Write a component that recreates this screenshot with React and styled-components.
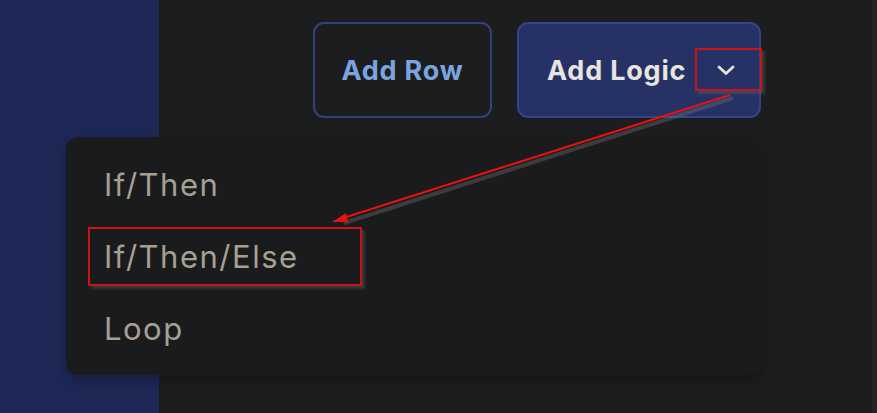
import styled, { createGlobalStyle } from "styled-components";

const GlobalStyle = createGlobalStyle`
  html, body {
    margin: 0;
    padding: 0;
    background: #1c1d1f;
    font-family: Inter, "Noto Sans", sans-serif;
  }
`;

const Page = styled.div`
  position: relative;
  display: flex;
  width: 877px;
  height: 413px;
  overflow: hidden;
  background: #1c1d1f;
`;

const Sidebar = styled.aside`
  width: 159px;
  flex-shrink: 0;
  background: #1e2856;
`;

const Main = styled.main`
  flex: 1;
  display: flex;
  flex-direction: column;
  border-right: 5px solid #242527;
`;

const Toolbar = styled.div`
  display: flex;
  justify-content: flex-end;
  gap: 25px;
  padding: 22px 111px 0 0;
`;

const Button = styled.button`
  display: flex;
  align-items: center;
  justify-content: ${({ $primary }) => ($primary ? "flex-start" : "center")};
  width: ${({ $w }) => $w}px;
  height: 96px;
  padding: ${({ $primary }) => ($primary ? "0 0 0 28px" : "0")};
  box-sizing: border-box;
  border-radius: 11px;
  border: 2px solid ${({ $primary }) => ($primary ? "#34448a" : "#30427f")};
  background: ${({ $primary }) => ($primary ? "#263266" : "transparent")};
  color: ${({ $primary }) => ($primary ? "#e8e4de" : "#7aa4df")};
  font-family: Inter, sans-serif;
  font-weight: 700;
  font-size: 27px;
  letter-spacing: 0.8px;
`;

const ChevronBox = styled.span`
  display: flex;
  align-items: center;
  justify-content: center;
  width: 66px;
  height: 42px;
  margin-left: auto;
`;

const Menu = styled.ul`
  position: absolute;
  left: 66px;
  top: 137px;
  width: 696px;
  margin: 0;
  padding: 11px 0;
  list-style: none;
  background: #1a1b1d;
  border-radius: 12px;
  box-shadow: 0 6px 14px rgba(0, 0, 0, 0.25);
`;

const MenuItem = styled.li`
  display: flex;
  align-items: center;
  height: 72px;
  padding-left: 38px;
  color: #a7a092;
  font-size: 31px;
  font-weight: 400;
  letter-spacing: 1.5px;
`;

const Highlight = styled.div`
  position: absolute;
  left: ${({ $x }) => $x}px;
  top: ${({ $y }) => $y}px;
  width: ${({ $w }) => $w}px;
  height: ${({ $h }) => $h}px;
  border: 2px solid #cc1212;
  box-sizing: border-box;
  box-shadow: 3px 3px 2px rgba(110, 110, 110, 0.35);
  pointer-events: none;
`;

const Overlay = styled.svg`
  position: absolute;
  left: 0;
  top: 0;
  pointer-events: none;
`;

function Chevron() {
  return (
    <svg width="22" height="14" viewBox="0 0 22 14">
      <path
        d="M4 4 L11 10.5 L18 4"
        fill="none"
        stroke="#e8e4de"
        strokeWidth="2.8"
        strokeLinecap="round"
        strokeLinejoin="round"
      />
    </svg>
  );
}

export default function App() {
  return (
    <>
      <GlobalStyle />
      <Page>
        <Sidebar />
        <Main>
          <Toolbar>
            <Button $w={179}>Add Row</Button>
            <Button $primary $w={244}>
              Add Logic
              <ChevronBox>
                <Chevron />
              </ChevronBox>
            </Button>
          </Toolbar>
        </Main>

        <Menu>
          <MenuItem>If/Then</MenuItem>
          <MenuItem>If/Then/Else</MenuItem>
          <MenuItem>Loop</MenuItem>
        </Menu>

        <Highlight $x={695} $y={48} $w={67} $h={43} />
        <Highlight $x={88} $y={227} $w={274} $h={59} />

        <Overlay width="877" height="413">
          <line x1="733" y1="98" x2="344" y2="223" stroke="rgba(110,110,110,0.4)" strokeWidth="4" />
          <line x1="730" y1="95" x2="340" y2="219" stroke="#e81010" strokeWidth="2.2" />
          <polygon points="332,222 346,213 348,222" fill="#e81010" />
        </Overlay>
      </Page>
    </>
  );
}
